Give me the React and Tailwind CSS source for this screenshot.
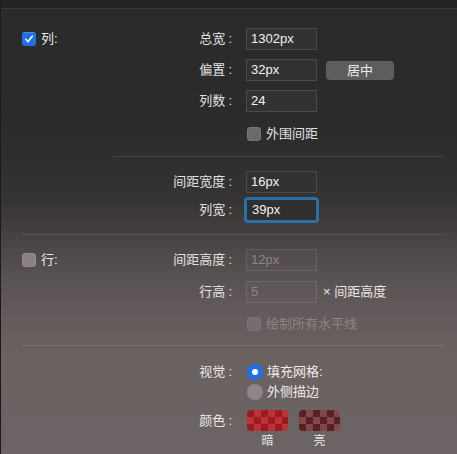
import React from 'react';

const font = { fontFamily: '"Liberation Sans", "Noto Sans CJK SC", sans-serif' };

function CheckBox({ checked, variant }) {
  if (checked) {
    return (
      <span className="flex h-[14px] w-[14px] items-center justify-center rounded-[3px] bg-[#1f6fe6] shadow-[inset_0_1px_0_rgba(255,255,255,0.2)]">
        <svg width="10" height="10" viewBox="0 0 10 10">
          <path d="M1.8 5.3 L4 7.6 L8.3 2.2" fill="none" stroke="#fff" strokeWidth="1.6" strokeLinecap="round" strokeLinejoin="round" />
        </svg>
      </span>
    );
  }
  const look = {
    dark: 'bg-[#6a6a6a] border border-[#777]',
    light: 'bg-[#8a8282] border border-[#948c8c]',
    off: 'bg-[#766e6e] border border-[#7c7474]',
  }[variant || 'dark'];
  return <span className={'block h-[14px] w-[14px] rounded-[3px] ' + look} />;
}

function Radio({ on }) {
  if (on) {
    return (
      <span className="flex h-[16px] w-[16px] items-center justify-center rounded-full bg-[#1f6fe6]">
        <span className="h-[6px] w-[6px] rounded-full bg-white" />
      </span>
    );
  }
  return <span className="block h-[16px] w-[16px] rounded-full bg-[#8e8686]" />;
}

function Field({ value, disabled, focus }) {
  if (focus) {
    return (
      <div className="-m-[2px] h-[26px] w-[75px] rounded-[4px] border-[3px] border-[#2a6fa8]">
        <div className="flex h-full items-center bg-[#2f2f2f] pl-[5px] text-[13px] text-[#f2f2f2]">{value}</div>
      </div>
    );
  }
  return (
    <div
      className={
        'flex h-[22px] w-[71px] items-center border pl-[4px] text-[13px] ' +
        (disabled
          ? 'border-white/10 bg-white/[0.02] text-[#8f8585]'
          : 'border-[#4a4a4a] bg-[#323232] text-[#f2f2f2]')
      }
    >
      {value}
    </div>
  );
}

function Label({ text }) {
  if (!text) return null;
  return (
    <>
      {text}
      <span className="ml-[3px]">:</span>
    </>
  );
}

function Row({ left, label, children, className = '' }) {
  return (
    <div className={'flex h-[22px] items-center ' + className}>
      <div className="flex w-[113px] items-center gap-[5px] pl-[21px]">{left}</div>
      <div className="w-[120px] pr-[2px] text-right text-[13px] text-[#e2e2e2]">
        <Label text={label} />
      </div>
      <div className="ml-[12px] flex items-center">{children}</div>
    </div>
  );
}

function Swatch({ a, b }) {
  return (
    <svg width="41" height="21" viewBox="0 0 41 21">
      <defs>
        <pattern id={'p' + a.slice(1)} width="14" height="14" patternUnits="userSpaceOnUse">
          <rect width="14" height="14" fill={b} />
          <rect width="7" height="7" fill={a} />
          <rect x="7" y="7" width="7" height="7" fill={a} />
        </pattern>
      </defs>
      <rect width="41" height="21" rx="4" fill={'url(#p' + a.slice(1) + ')'} />
    </svg>
  );
}

export default function App() {
  return (
    <div
      style={font}
      className="relative h-[454px] w-[457px] overflow-hidden border-l border-[#1b1b1b] bg-[linear-gradient(180deg,#2a2a2a_0%,#2c2c2c_30%,#353333_44%,#474242_52%,#575050_60%,#625a5a_68%,#6a6161_78%,#6c6464_100%)]"
    >
      <div className="h-[9px] border-b border-[#3a3a3a] bg-[#232323]" />

      {/* 列 */}
      <Row
        className="mt-[19px]"
        left={
          <>
            <CheckBox checked />
            <span className="text-[13px] text-[#e8e8e8]">列:</span>
          </>
        }
        label="总宽"
      >
        <Field value="1302px" />
      </Row>
      <Row className="mt-[9px]" label="偏置">
        <Field value="32px" />
        <button className="ml-[9px] h-[19px] w-[68px] rounded-[4px] bg-[#5d5d5d] text-[13px] leading-[19px] text-[#ececec]">
          居中
        </button>
      </Row>
      <Row className="mt-[9px]" label="列数">
        <Field value="24" />
      </Row>
      <Row className="mt-[11px]" label="">
        <div className="ml-[1px] flex items-center gap-[5px] text-[13px] text-[#e2e2e2]">
          <CheckBox />
          外围间距
        </div>
      </Row>

      <div className="ml-[113px] mt-[11px] h-px w-[330px] bg-[#434343]" />

      <Row className="mt-[14px]" label="间距宽度">
        <Field value="16px" />
      </Row>
      <Row className="mt-[6px]" label="列宽">
        <Field value="39px" focus />
      </Row>

      <div className="ml-[21px] mt-[13px] h-px w-[422px] bg-[#575252]" />

      {/* 行 */}
      <Row
        className="mt-[14px]"
        left={
          <>
            <CheckBox variant="light" />
            <span className="text-[13px] text-[#ece8e8]">行:</span>
          </>
        }
        label="间距高度"
      >
        <Field value="12px" disabled />
      </Row>
      <Row className="mt-[10px]" label="行高">
        <Field value="5" disabled />
        <span className="ml-[6px] text-[13px] text-[#ece8e8]">× 间距高度</span>
      </Row>
      <Row className="mt-[10px]" label="">
        <div className="ml-[1px] flex items-center gap-[5px] text-[13px] text-[#8e8484]">
          <CheckBox variant="off" />
          绘制所有水平线
        </div>
      </Row>

      <div className="ml-[21px] mt-[10px] h-px w-[422px] bg-[#7c7272]" />

      {/* 视觉 */}
      <div className="mt-[18px] flex text-[13px] leading-[16px]">
        <div className="w-[233px] pr-[2px] text-right text-[#ece8e8]">
          <Label text="视觉" />
        </div>
        <div className="ml-[13px] flex flex-col gap-[4px] text-[#f0ecec]">
          <div className="flex items-center gap-[4px]">
            <Radio on />
            填充网格:
          </div>
          <div className="flex items-center gap-[4px]">
            <Radio />
            外侧描边
          </div>
        </div>
      </div>

      <div className="mt-[10px] flex items-start">
        <div className="w-[233px] pr-[2px] text-right text-[13px] leading-[21px] text-[#ece8e8]">
          <Label text="颜色" />
        </div>
        <div className="ml-[13px] flex gap-[11px] text-[12px] leading-[14px] text-[#ece8e8]">
          <div className="flex flex-col items-center">
            <Swatch a="#9d1b20" b="#b93337" />
            <span className="mt-[3px]">暗</span>
          </div>
          <div className="flex flex-col items-center">
            <Swatch a="#5b2025" b="#804849" />
            <span className="mt-[3px]">亮</span>
          </div>
        </div>
      </div>
    </div>
  );
}
